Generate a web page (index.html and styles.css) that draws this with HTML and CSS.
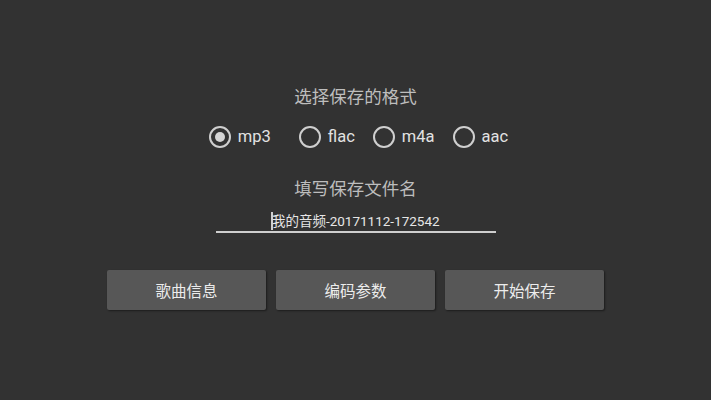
FILE: index.html
```html
<!DOCTYPE html>
<html lang="zh">
<head>
<meta charset="utf-8">
<title>保存</title>
<link rel="stylesheet" href="styles.css">
</head>
<body>
<main class="screen">
  <div class="title">选择保存的格式</div>
  <div class="radios">
    <label class="radio first"><span class="circle checked"></span><span class="rlabel">mp3</span></label>
    <label class="radio"><span class="circle"></span><span class="rlabel">flac</span></label>
    <label class="radio"><span class="circle"></span><span class="rlabel">m4a</span></label>
    <label class="radio"><span class="circle"></span><span class="rlabel">aac</span></label>
  </div>
  <div class="title title2">填写保存文件名</div>
  <div class="field"><span class="caret"></span><span class="value">我的音频-20171112-172542</span></div>
  <div class="buttons">
    <div class="btn">歌曲信息</div>
    <div class="btn">编码参数</div>
    <div class="btn">开始保存</div>
  </div>
</main>
</body>
</html>
```

FILE: styles.css
```css
html, body {
  margin: 0;
  padding: 0;
  background: #323232;
}
body {
  width: 711px;
  height: 400px;
  overflow: hidden;
  font-family: Roboto, "Noto Sans CJK SC", sans-serif;
}
.screen {
  display: flex;
  flex-direction: column;
  align-items: center;
  padding-top: 85px;
}
.title {
  font-size: 17.5px;
  line-height: 24px;
  color: #bdbdbd;
  height: 24px;
}
.radios {
  display: flex;
  align-items: center;
  gap: 18px;
  margin-top: 16px;
  height: 24px;
  padding-left: 6px;
}
.radio {
  display: flex;
  align-items: center;
  gap: 7px;
}
.radio.first {
  margin-right: 10px;
}
.circle {
  width: 22px;
  height: 22px;
  box-sizing: border-box;
  border: 2px solid #cfcfcf;
  border-radius: 50%;
  display: flex;
  align-items: center;
  justify-content: center;
}
.circle.checked::after {
  content: "";
  width: 10px;
  height: 10px;
  border-radius: 50%;
  background: #d4d4d4;
}
.rlabel {
  font-size: 16.5px;
  color: #e2e2e2;
  line-height: 22px;
}
.title2 {
  margin-top: 28px;
}
.field {
  margin-top: 10px;
  width: 280px;
  height: 20px;
  border-bottom: 2px solid #cfcfcf;
  display: flex;
  justify-content: center;
  align-items: center;
  padding-bottom: 0;
}
.caret {
  width: 1.5px;
  height: 18px;
  background: #cfcfcf;
  margin-right: -1px;
}
.value {
  font-size: 13.5px;
  color: #e6e6e6;
  line-height: 20px;
}
.buttons {
  display: flex;
  gap: 10px;
  margin-top: 37px;
}
.btn {
  width: 159px;
  height: 40px;
  background: #575757;
  border-radius: 2px;
  box-shadow: 1px 1px 2px rgba(0, 0, 0, 0.45);
  display: flex;
  align-items: center;
  justify-content: center;
  color: #ececec;
  font-size: 15.5px;
}
```
